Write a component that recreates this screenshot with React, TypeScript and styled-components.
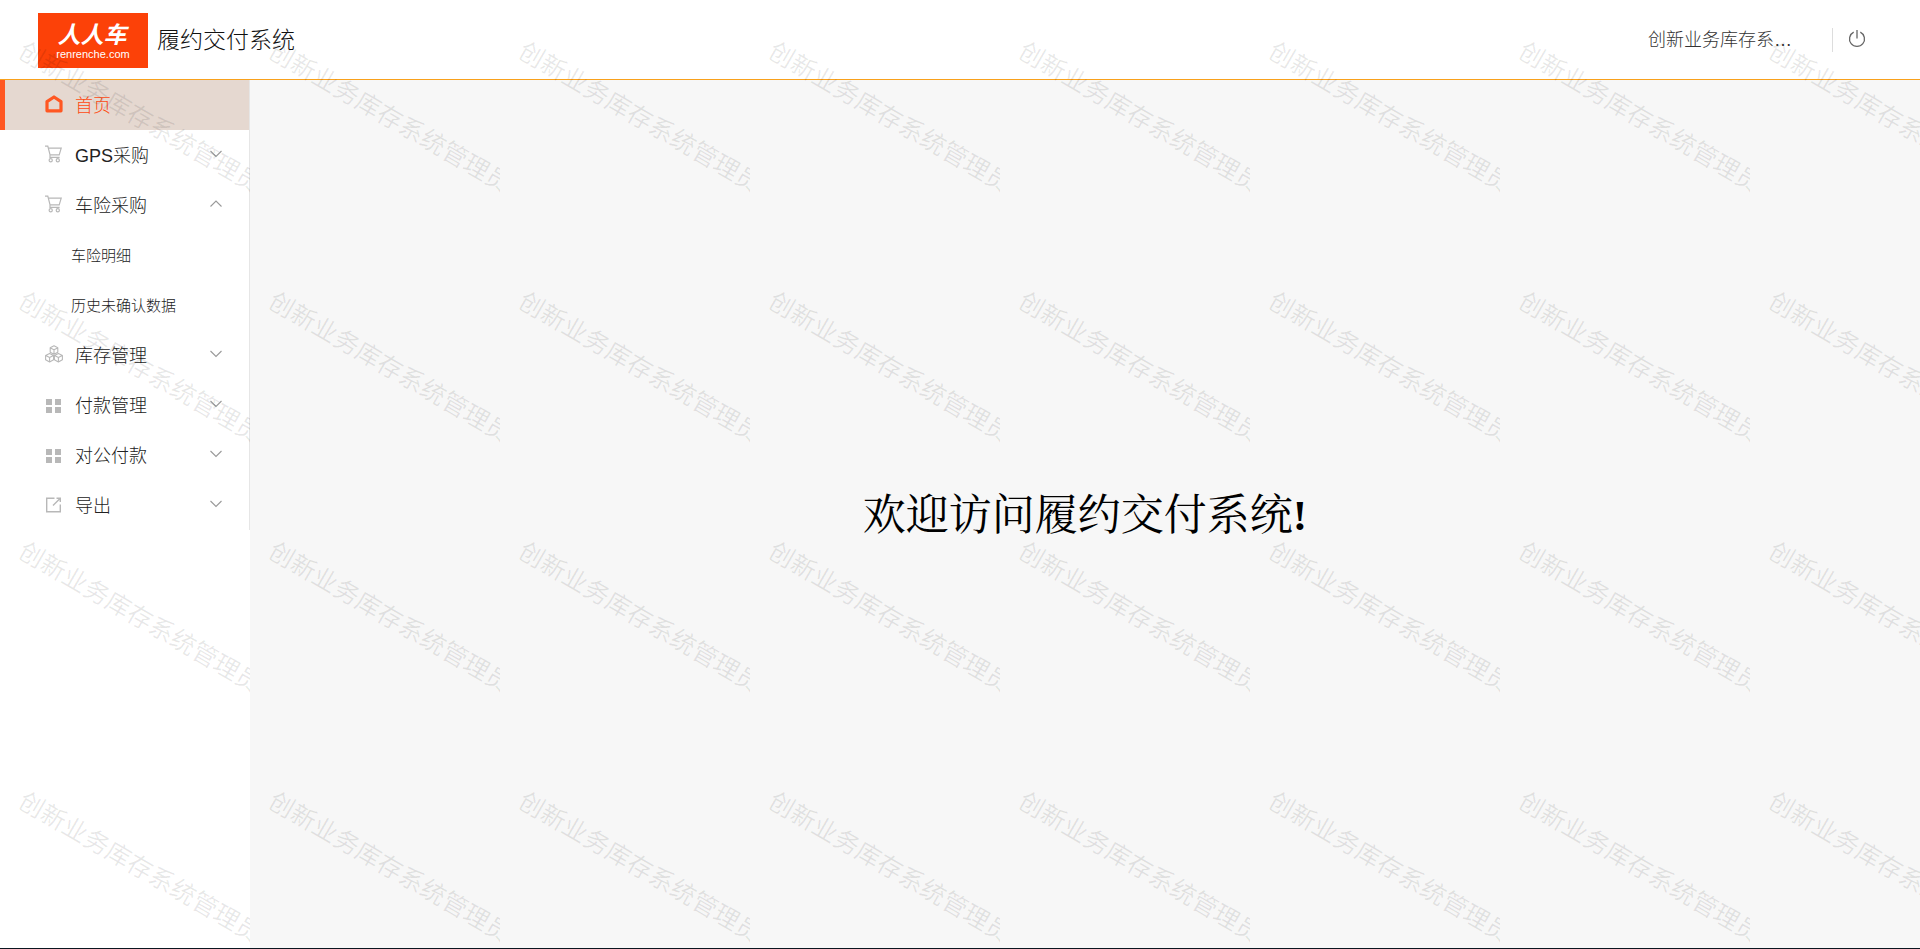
import React, { useState } from 'react';
import styled, { createGlobalStyle } from 'styled-components';

const GlobalStyle = createGlobalStyle`
  * { box-sizing: border-box; }
  body {
    margin: 0;
    background: #fff;
    color: #111;
    font-family: "Liberation Sans", "Noto Sans CJK SC", sans-serif;
    font-weight: 300;
  }
`;

const Page = styled.div`
  position: relative;
  display: flex;
  flex-direction: column;
  min-height: 100vh;
  overflow: hidden;
  border-bottom: 1px solid #0b1620;
`;

const Header = styled.header`
  display: flex;
  align-items: center;
  height: 80px;
  padding: 0 54px 0 38px;
  border-bottom: 1px solid #f9a11b;
  background: #fff;
`;

const Logo = styled.a`
  display: flex;
  flex-direction: column;
  align-items: center;
  width: 110px;
  height: 55px;
  margin-top: 2px;
  padding-top: 9px;
  background: #fc4108;
  color: #fff;
  text-decoration: none;
`;

const LogoName = styled.span`
  padding-right: 2px;
  font-size: 23px;
  font-style: italic;
  font-weight: 700;
  line-height: 27px;
`;

const LogoDomain = styled.span`
  font-size: 11px;
  font-weight: 400;
  line-height: 10px;
`;

const SystemName = styled.h1`
  flex: 1;
  margin: 0 0 0 9px;
  font-size: 23px;
  font-weight: 300;
  line-height: 30px;
`;

const UserName = styled.span`
  width: 148px;
  overflow: hidden;
  color: #333;
  font-size: 18px;
  line-height: 24px;
  text-overflow: ellipsis;
  white-space: nowrap;
`;

const LogoutButton = styled.button`
  display: flex;
  align-items: center;
  height: 24px;
  margin-left: 36px;
  padding: 0 0 2px 15px;
  border: 0;
  border-left: 1px solid #ddd;
  background: none;
  color: #666;
`;

const Body = styled.div`
  display: flex;
  flex: 1;
`;

const Sidebar = styled.aside`
  width: 250px;
  flex-shrink: 0;
  background: #fff;
`;

const Menu = styled.nav`
  display: flex;
  flex-direction: column;
  border-right: 1px solid #e6e6e6;
`;

const HomeLink = styled.a`
  display: flex;
  align-items: center;
  height: 50px;
  padding: 0 0 2px 40px;
  border-left: 5px solid #ff5722;
  background: #e5d8d0;
  color: #ff4a10;
  font-size: 18px;
  text-decoration: none;
`;

const GroupButton = styled.button`
  display: flex;
  align-items: center;
  width: 100%;
  height: 50px;
  padding: 0 27px 2px 45px;
  border: 0;
  background: none;
  color: #222;
  font: inherit;
  font-size: 18px;
  text-align: left;
`;

const MenuIcon = styled.span`
  display: flex;
  width: 30px;
  color: #b8b8b8;
`;

const HomeIcon = styled(MenuIcon)`
  color: #ff5722;
`;

const GroupLabel = styled.span`
  flex: 1;
`;

const SubLink = styled.a`
  display: flex;
  align-items: center;
  height: 50px;
  padding: 0 0 2px 71px;
  color: #222;
  font-size: 15px;
  text-decoration: none;
`;

const Main = styled.main`
  display: flex;
  flex: 1;
  align-items: center;
  justify-content: center;
  padding-top: 4px;
  background: #f7f7f7;
`;

const Welcome = styled.h2`
  margin: 0;
  color: #000;
  font-family: "Liberation Serif", "Noto Serif CJK SC", "Noto Sans CJK SC", serif;
  font-size: 43px;
  font-weight: 400;
  line-height: 60px;
`;

const Exclamation = styled.span`
  font-weight: 700;
`;

const Watermark = styled.div`
  position: absolute;
  inset: 0;
  display: grid;
  grid-template-columns: repeat(8, 250px);
  grid-auto-rows: 250px;
  overflow: hidden;
  pointer-events: none;
`;

const WatermarkTile = styled.div`
  padding: 38px 0 0 27px;
  overflow: hidden;
  color: rgba(0, 0, 0, 0.09);
  font-size: 25px;
  font-weight: 400;
  line-height: 25px;
  white-space: nowrap;
`;

const WatermarkText = styled.div`
  width: 275px;
  transform: rotate(30deg);
  transform-origin: 0 0;
`;

const USER = '创新业务库存系统管理员';

const House = () => (
  <svg width="18" height="18" viewBox="0 0 18 18" fill="none" stroke="currentColor" strokeWidth="3.2" strokeLinejoin="round">
    <path d="M2 6.6 9 2l7 4.6v9.2H2z" />
  </svg>
);

const Cart = () => (
  <svg width="18" height="18" viewBox="0 0 18 18" fill="none" stroke="currentColor" strokeWidth="1.2">
    <path d="M0 1.2h2.8L5 9.6v2.7h9.6M3.2 3.2h13l-2 6.6H5" />
    <circle cx="5.7" cy="15.3" r="1.6" />
    <circle cx="12.8" cy="15.3" r="1.6" />
  </svg>
);

const Cubes = () => (
  <svg width="18" height="18" viewBox="0 0 18 18" fill="none" stroke="currentColor" strokeWidth="1.1" strokeLinejoin="round">
    <path d="M9 .8 12.8 2.8v4.4L9 9.2 5.2 7.2V2.8zM5.4 3 9 4.8 12.6 3M9 4.8v4.4" />
    <path d="M4.6 8.5 8.6 10.4v4.4l-4 2.2-4-2.2v-4.4zM.8 10.6l3.8 1.9 3.8-1.9M4.6 12.5V17" />
    <path d="M13.4 8.5l4 1.9v4.4l-4 2.2-4-2.2v-4.4zM9.6 10.6l3.8 1.9 3.8-1.9M13.4 12.5V17" />
  </svg>
);

const Blocks = () => (
  <svg width="18" height="18" viewBox="0 0 18 18" fill="currentColor">
    <path d="M1 4h6v6H1zM10 4h6v6h-6zM1 12h6v6H1zM10 12h6v6h-6z" />
  </svg>
);

const ExportBox = () => (
  <svg width="18" height="18" viewBox="0 0 18 18" fill="none" stroke="currentColor" strokeWidth="1.4">
    <path d="M9.5 3.2H1.7v13.6h13.6V9.5M11.5 3.2h3.8V7M15.3 3.2 8 10.5" />
  </svg>
);

const Chevron = ({ up }: { up: boolean }) => (
  <svg width="12" height="8" viewBox="0 0 12 8" fill="none" stroke="#999" strokeWidth="1.1">
    <path d={up ? 'M.5 6.5 6 1l5.5 5.5' : 'M.5 1 6 6.5 11.5 1'} />
  </svg>
);

const Power = () => (
  <svg width="18" height="18" viewBox="0 0 18 18" fill="none" stroke="currentColor" strokeWidth="1.3">
    <path d="M5.7 2.2a7.5 7.5 0 1 0 6.6 0M9 0v8.5" />
  </svg>
);

interface Group {
  label: string;
  icon: React.ReactNode;
  children?: string[];
}

const GROUPS: Group[] = [
  { label: 'GPS采购', icon: <Cart /> },
  { label: '车险采购', icon: <Cart />, children: ['车险明细', '历史未确认数据'] },
  { label: '库存管理', icon: <Cubes /> },
  { label: '付款管理', icon: <Blocks /> },
  { label: '对公付款', icon: <Blocks /> },
  { label: '导出', icon: <ExportBox /> },
];

export default function App() {
  const [open, setOpen] = useState('车险采购');

  return (
    <Page>
      <GlobalStyle />
      <Header>
        <Logo href="#home">
          <LogoName>人人车</LogoName>
          <LogoDomain>renrenche.com</LogoDomain>
        </Logo>
        <SystemName>履约交付系统</SystemName>
        <UserName title={USER}>{USER}</UserName>
        <LogoutButton type="button" aria-label="退出">
          <Power />
        </LogoutButton>
      </Header>
      <Body>
        <Sidebar>
          <Menu>
            <HomeLink href="#home" aria-current="page">
              <HomeIcon><House /></HomeIcon>
              首页
            </HomeLink>
            {GROUPS.map((group) => {
              const expanded = open === group.label;
              return (
                <React.Fragment key={group.label}>
                  <GroupButton
                    type="button"
                    aria-expanded={expanded}
                    onClick={() => setOpen(expanded ? '' : group.label)}
                  >
                    <MenuIcon>{group.icon}</MenuIcon>
                    <GroupLabel>{group.label}</GroupLabel>
                    <Chevron up={expanded} />
                  </GroupButton>
                  {expanded &&
                    group.children?.map((child) => (
                      <SubLink key={child} href={`#${child}`}>{child}</SubLink>
                    ))}
                </React.Fragment>
              );
            })}
          </Menu>
        </Sidebar>
        <Main>
          <Welcome>欢迎访问履约交付系统<Exclamation>!</Exclamation></Welcome>
        </Main>
      </Body>
      <Watermark aria-hidden="true">
        {Array.from({ length: 32 }, (_, i) => (
          <WatermarkTile key={i}>
            <WatermarkText>{USER}</WatermarkText>
          </WatermarkTile>
        ))}
      </Watermark>
    </Page>
  );
}
